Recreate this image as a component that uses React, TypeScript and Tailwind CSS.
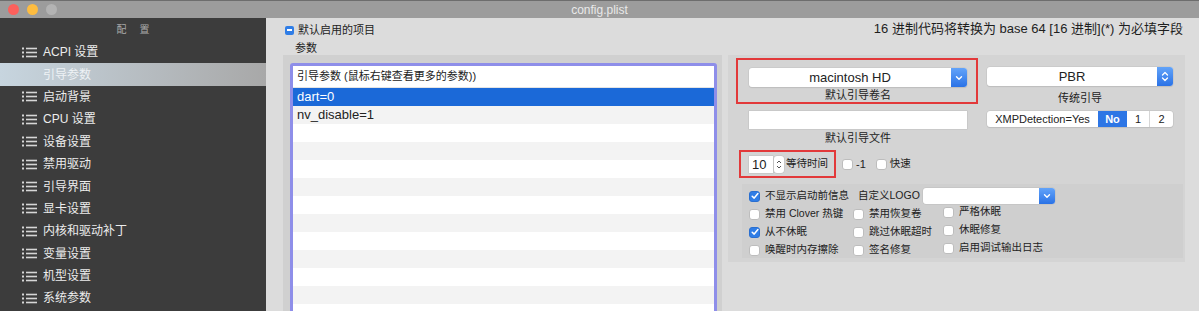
import React from "react";

const SIDEBAR = [
  "ACPI 设置",
  "引导参数",
  "启动背景",
  "CPU 设置",
  "设备设置",
  "禁用驱动",
  "引导界面",
  "显卡设置",
  "内核和驱动补丁",
  "变量设置",
  "机型设置",
  "系统参数",
];

const ROWS = ["dart=0", "nv_disable=1", "", "", "", "", "", "", "", "", "", "", ""];

const FLAGS: { label: string; checked?: boolean; up?: boolean }[][] = [
  [{ label: "禁用 Clover 热键" }, { label: "禁用恢复卷" }, { label: "严格休眠", up: true }],
  [{ label: "从不休眠", checked: true }, { label: "跳过休眠超时" }, { label: "休眠修复", up: true }],
  [{ label: "唤醒时内存擦除" }, { label: "签名修复" }, { label: "启用调试输出日志", up: true }],
];

function ListIcon() {
  return (
    <svg width="15" height="11" viewBox="0 0 15 11" className="shrink-0">
      <rect x="0" y="0.5" width="2" height="2" fill="#d6d6d6" />
      <rect x="0" y="4.5" width="2" height="2" fill="#d6d6d6" />
      <rect x="0" y="8.5" width="2" height="2" fill="#d6d6d6" />
      <rect x="4" y="0.7" width="11" height="1.6" fill="#d6d6d6" />
      <rect x="4" y="4.7" width="11" height="1.6" fill="#d6d6d6" />
      <rect x="4" y="8.7" width="11" height="1.6" fill="#d6d6d6" />
    </svg>
  );
}

function Check({ checked }: { checked?: boolean }) {
  if (checked)
    return (
      <div className="w-[11px] h-[11px] shrink-0 rounded-[3px] bg-[#2f7de6] border border-[#2a6fd0] flex items-center justify-center">
        <svg width="8" height="8" viewBox="0 0 8 8">
          <path d="M1.2 4.2 L3.2 6.1 L6.9 1.6" stroke="white" strokeWidth="1.5" fill="none" strokeLinecap="round" strokeLinejoin="round" />
        </svg>
      </div>
    );
  return <div className="w-[11px] h-[11px] shrink-0 rounded-[3px] bg-white border border-[#bdbdbd]" />;
}

function BlueButton({ updown }: { updown?: boolean }) {
  return (
    <span className="w-[16px] h-full shrink-0 rounded-r-[3px] bg-gradient-to-b from-[#62a3f9] to-[#2a72e6] flex items-center justify-center">
      {updown ? (
        <svg width="8" height="11" viewBox="0 0 8 11">
          <path d="M1.5 4 L4 1.5 L6.5 4 M1.5 7 L4 9.5 L6.5 7" stroke="white" strokeWidth="1.3" fill="none" strokeLinecap="round" strokeLinejoin="round" />
        </svg>
      ) : (
        <svg width="8" height="6" viewBox="0 0 8 6">
          <path d="M1.5 1.8 L4 4.3 L6.5 1.8" stroke="white" strokeWidth="1.4" fill="none" strokeLinecap="round" strokeLinejoin="round" />
        </svg>
      )}
    </span>
  );
}

export default function App() {
  return (
    <div className="w-[1199px] h-[311px] overflow-hidden flex flex-col bg-[#dcdcdc] text-[#222] font-['Liberation_Sans','Noto_Sans_CJK_SC',sans-serif]">
      {/* title bar */}
      <div className="h-[18px] shrink-0 grid grid-cols-[1fr_auto_1fr] items-center bg-[#9c9c9c] border-t border-[#6d6d6d]">
        <div className="flex items-center gap-[8px] pl-[8px]">
          <span className="w-[11px] h-[11px] rounded-full bg-[#fc605c]" />
          <span className="w-[11px] h-[11px] rounded-full bg-[#fdbc40]" />
          <span className="w-[11px] h-[11px] rounded-full bg-[#b3b3b3]" />
        </div>
        <div className="text-[12px] text-[#e9e9e9] leading-none">config.plist</div>
        <div />
      </div>

      <div className="flex flex-1 min-h-0">
        {/* sidebar */}
        <div className="w-[266px] shrink-0 bg-[#3c3c3c] flex flex-col">
          <div className="h-[23px] flex items-center justify-center text-[10px] text-[#a9a9a9] [word-spacing:10px]">配 置</div>
          {SIDEBAR.map((name) =>
            name === "引导参数" ? (
              <div
                key={name}
                className="h-[22.4px] shrink-0 flex items-center pl-[43px] text-[12px] text-[#eef2f5] bg-gradient-to-r from-[#c7d5df] to-[#a8a8a8]"
              >
                {name}
              </div>
            ) : (
              <div key={name} className="h-[22.4px] shrink-0 flex items-center pl-[22px] gap-[6px] text-[12px] text-[#ececec]">
                <ListIcon />
                <span>{name}</span>
              </div>
            )
          )}
        </div>

        {/* main */}
        <div className="flex-1 min-w-0 flex flex-col pl-[17px] pr-[14px]">
          <div className="mt-[4px] h-[16px] flex items-center justify-between">
            <div className="flex items-center">
              <span className="ml-[2px] w-[9px] h-[9px] rounded-[2px] bg-[#2f7de6] flex items-center justify-center">
                <span className="w-[5px] h-[1.5px] bg-white" />
              </span>
              <span className="ml-[4px] text-[11px]">默认启用的项目</span>
            </div>
            <span className="mr-[2px] -mt-[2px] text-[13px] text-[#1e1e1e]">16 进制代码将转换为 base 64 [16 进制](*) 为必填字段</span>
          </div>
          <div className="h-[17px] pt-[3px] flex items-center pl-[12px] text-[11px]">参数</div>

          <div className="flex-1 min-h-0 flex gap-[6px] items-start">
            {/* left group with table */}
            <div className="w-[439px] self-stretch bg-[#d0d0d0] pl-[7px] pr-[5px] pt-[8px] overflow-hidden">
              <div className="h-[260px] border-[3px] border-[#8e8ee9] rounded-[3px] bg-white overflow-hidden">
                <div className="h-[22px] flex items-center pl-[4px] text-[11px] border-b border-[#e4e4e4]">
                  引导参数 (鼠标右键查看更多的参数))
                </div>
                {ROWS.map((r, i) => (
                  <div
                    key={i}
                    className={
                      i === 0
                        ? "h-[18px] flex items-center pl-[4px] text-[13px] text-white bg-[#1b69d8]"
                        : i % 2 === 1
                        ? "h-[18px] flex items-center pl-[4px] text-[13px] bg-[#f3f3f3]"
                        : "h-[18px] flex items-center pl-[4px] text-[13px] bg-white"
                    }
                  >
                    {r}
                  </div>
                ))}
              </div>
            </div>

            {/* right group */}
            <div className="flex-1 h-[207px] bg-[#d4d4d4] pl-[8px] pt-[3px]">
              <div className="flex gap-[9px] items-start">
                <div className="w-[242px] h-[46px] border-2 border-[#e2393a] pl-[11px] pt-[8px]">
                  <div className="w-[218px] h-[19px] flex bg-white rounded-[3px] shadow-[0_0_0_0.5px_#c2c2c2,0_1px_1px_rgba(0,0,0,0.12)]">
                    <span className="flex-1 text-center text-[13px] leading-[19px]">macintosh HD</span>
                    <BlueButton />
                  </div>
                  <div className="w-[218px] mt-[2px] text-center text-[11px] leading-[13px]">默认引导卷名</div>
                </div>
                <div className="w-[186px] pt-[9px]">
                  <div className="h-[19px] flex bg-white rounded-[3px] shadow-[0_0_0_0.5px_#c2c2c2,0_1px_1px_rgba(0,0,0,0.12)]">
                    <span className="flex-1 text-center text-[13px] leading-[19px]">PBR</span>
                    <BlueButton updown />
                  </div>
                  <div className="mt-[5px] text-center text-[11px] leading-[14px]">传统引导</div>
                </div>
              </div>

              <div className="mt-[6px] flex gap-[9px] items-start">
                <div className="w-[242px] pl-[13px]">
                  <div className="w-[218px] h-[18px] bg-white shadow-[0_0_0_0.5px_#bdbdbd]" />
                  <div className="w-[218px] mt-[3px] text-center text-[11px] leading-[12px]">默认引导文件</div>
                </div>
                <div className="w-[186px] h-[16px] flex bg-white rounded-[3px] shadow-[0_0_0_0.5px_#bdbdbd,0_1px_1px_rgba(0,0,0,0.1)] text-[11px] leading-[16px] overflow-hidden">
                  <span className="w-[111px] text-center">XMPDetection=Yes</span>
                  <span className="w-[29px] text-center text-white bg-[#2d76e5] font-bold">No</span>
                  <span className="w-[23px] text-center border-r border-[#d6d6d6]">1</span>
                  <span className="flex-1 text-center">2</span>
                </div>
              </div>

              <div className="mt-[6px] flex items-center">
                <div className="ml-[3px] w-[97px] h-[28px] border-2 border-[#e2393a] pl-[8px] flex items-center">
                  <div className="w-[24px] h-[17px] bg-white shadow-[0_0_0_0.5px_#bdbdbd] text-[13px] leading-[17px] pl-[3px]">10</div>
                  <div className="ml-[1px] w-[10px] h-[17px] bg-white rounded-[3px] shadow-[0_0_0_0.5px_#bdbdbd] flex items-center justify-center">
                    <svg width="6" height="11" viewBox="0 0 6 11">
                      <path d="M1 4 L3 2 L5 4 M1 7 L3 9 L5 7" stroke="#555" strokeWidth="1" fill="none" />
                    </svg>
                  </div>
                  <span className="ml-[2px] text-[10.5px]">等待时间</span>
                </div>
                <div className="ml-[6px] flex items-center gap-[3px]">
                  <Check />
                  <span className="text-[11px]">-1</span>
                </div>
                <div className="ml-[10px] flex items-center gap-[3px]">
                  <Check />
                  <span className="text-[10.5px]">快速</span>
                </div>
              </div>

              <div className="mt-[6px] ml-[6px] mr-[2px] h-[74px] bg-[#cfcfcf] pl-[7px] pt-[3px] text-[10.5px]">
                <div className="h-[18px] flex items-center">
                  <Check checked />
                  <span className="ml-[5px] w-[93px]">不显示启动前信息</span>
                  <span className="w-[65px]">自定义LOGO</span>
                  <div className="w-[132px] h-[16px] flex bg-white rounded-[3px] shadow-[0_0_0_0.5px_#bdbdbd]">
                    <span className="flex-1" />
                    <BlueButton />
                  </div>
                </div>
                {FLAGS.map((row, ri) => (
                  <div key={ri} className="h-[18px] grid grid-cols-[104px_90px_1fr] items-center">
                    {row.map((f) => (
                      <div key={f.label} className={f.up ? "flex items-center gap-[5px] -translate-y-[2px]" : "flex items-center gap-[5px]"}>
                        <Check checked={f.checked} />
                        <span>{f.label}</span>
                      </div>
                    ))}
                  </div>
                ))}
              </div>
            </div>
          </div>
        </div>
      </div>
    </div>
  );
}
